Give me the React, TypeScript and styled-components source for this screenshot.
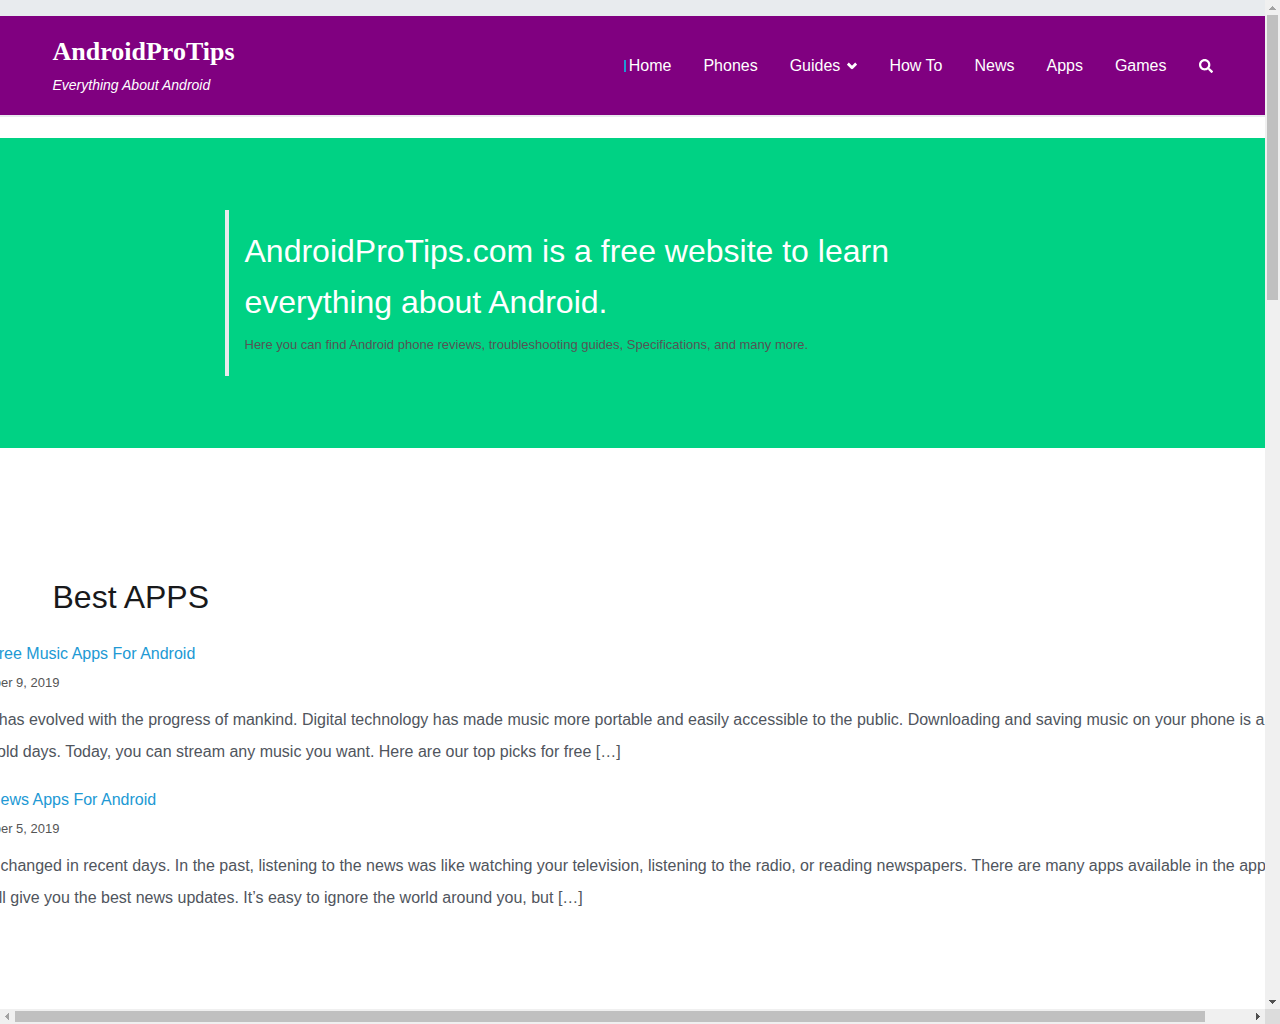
import React from "react";
import styled, { createGlobalStyle } from "styled-components";
import { FaSearch } from "react-icons/fa";

const colors = {
  mist: "#e8ebee",
  purple: "#800080",
  green: "#00d284",
  blue: "#2199d4",
  ink: "#18191b",
  body: "#50555d",
  muted: "#555",
  track: "#f0f0f0",
  thumb: "#c0c0c0",
};

const GlobalStyle = createGlobalStyle`
  *, *::before, *::after { box-sizing: border-box; }
  body {
    margin: 0;
    background: #fff;
    color: ${colors.body};
    font-family: "Liberation Sans", Arial, sans-serif;
    font-size: 16px;
    line-height: 32px;
  }
  h1, h2, h3, p, ul, blockquote { margin: 0; padding: 0; }
  ul { list-style: none; }
  a { color: inherit; text-decoration: none; }
`;

const Shell = styled.div`
  display: grid;
  grid-template: minmax(0, 1fr) 15px / minmax(0, 1fr) 15px;
  height: 100vh;
`;

const Viewport = styled.div`
  overflow: hidden;
`;

const Container = styled.div`
  max-width: 1160px;
  margin: 0 auto;
`;

const Header = styled.header`
  border-top: 16px solid ${colors.mist};
  border-bottom: 2px solid ${colors.mist};
  background: ${colors.purple};
  color: #fff;
`;

const HeaderRow = styled(Container)`
  display: flex;
  align-items: center;
  justify-content: space-between;
  padding: 16px 0;
`;

const SiteTitle = styled.h1`
  font: bold 26px/40px "Liberation Serif", "Times New Roman", serif;
`;

const Tagline = styled.p`
  font-size: 14px;
  font-style: italic;
  line-height: 27px;
`;

const Menu = styled.ul`
  display: flex;
  align-items: center;
  gap: 32px;
`;

const MenuLink = styled.a<{ $current?: boolean }>`
  display: flex;
  align-items: center;
  gap: 7px;
  line-height: 12px;
  ${({ $current }) =>
    $current && `border-left: 2px solid ${colors.blue}; padding-left: 3px;`}
`;

const SearchButton = styled.button`
  display: flex;
  padding: 0;
  border: 0;
  background: none;
  color: inherit;
  cursor: pointer;
`;

const Hero = styled.section`
  margin-top: 21px;
  padding: 72px 24px;
  background: ${colors.green};
`;

const Quote = styled.blockquote`
  max-width: 816px;
  margin: 0 auto;
  padding: 16px;
  border-left: 4px solid ${colors.mist};
`;

const QuoteText = styled.p`
  color: #fff;
  font-size: 32px;
  line-height: 51px;
`;

const QuoteNote = styled.footer`
  padding: 4px 0 2px;
  color: ${colors.muted};
  font-size: 13px;
  line-height: 26px;
`;

const Section = styled(Container)`
  padding-top: 123px;
`;

const SectionTitle = styled.h2`
  color: ${colors.ink};
  font-size: 32px;
  font-weight: 400;
  line-height: 52px;
`;

const PostList = styled.ul`
  display: grid;
  gap: 16px;
  margin: 15px -100px 0;
`;

const PostLink = styled.a`
  display: block;
  color: ${colors.blue};
`;

const PostDate = styled.time`
  display: block;
  margin-bottom: 8px;
  color: ${colors.muted};
  font-size: 13px;
  line-height: 26px;
`;

const Bar = styled.div<{ $across?: boolean }>`
  display: flex;
  flex-direction: ${({ $across }) => ($across ? "row" : "column")};
  background: ${colors.track};
`;

const Track = styled.div<{ $across?: boolean }>`
  display: flex;
  flex: 1;
  flex-direction: ${({ $across }) => ($across ? "row" : "column")};
  padding: ${({ $across }) => ($across ? "2px 0" : "0 2px")};
`;

const Thumb = styled.div<{ $share: number }>`
  flex: 0 0 ${({ $share }) => $share * 100}%;
  background: ${colors.thumb};
`;

const Corner = styled.div`
  background: #dcdcdc;
`;

const arrows = {
  up: "M4 10 7.500 6 11 10Z",
  down: "M4 6 7.500 10 11 6Z",
  left: "M9 4 5 7.500 9 11Z",
  right: "M6 4 10 7.500 6 11Z",
};

function Arrow({ to, dim }: { to: keyof typeof arrows; dim?: boolean }) {
  return (
    <svg width="15" height="15" viewBox="0 0 15 15" fill={dim ? "#a3a3a3" : "#505050"} shapeRendering="crispEdges" aria-hidden="true">
      <path d={arrows[to]} />
    </svg>
  );
}

function Chevron() {
  return (
    <svg width="10" height="8" viewBox="0 0 10 8" fill="none" stroke="currentColor" strokeWidth="2.8" strokeLinejoin="round" aria-hidden="true">
      <path d="M0.800 1.600 5 5.800 9.200 1.600" />
    </svg>
  );
}

const menu = ["Home", "Phones", "Guides", "How To", "News", "Apps", "Games"];

const posts = [
  {
    title: "Best Free Music Apps For Android",
    date: "November 9, 2019",
    dateTime: "2019-11-09",
    excerpt:
      "Music has evolved with the progress of mankind. Digital technology has made music more portable and easily accessible to the public. Downloading and saving music on your phone is a thing of the old days. Today, you can stream any music you want. Here are our top picks for free […]",
  },
  {
    title: "Best News Apps For Android",
    date: "November 5, 2019",
    dateTime: "2019-11-05",
    excerpt:
      "Media changed in recent days. In the past, listening to the news was like watching your television, listening to the radio, or reading newspapers. There are many apps available in the app store that will give you the best news updates. It’s easy to ignore the world around you, but […]",
  },
];

export default function App() {
  return (
    <>
      <GlobalStyle />
      <Shell>
        <Viewport>
          <Header>
            <HeaderRow>
              <div>
                <SiteTitle><a href="#">AndroidProTips</a></SiteTitle>
                <Tagline>Everything About Android</Tagline>
              </div>
              <nav aria-label="Main">
                <Menu>
                  {menu.map((label) => (
                    <li key={label}>
                      <MenuLink href="#" $current={label === "Home"}>
                        {label}
                        {label === "Guides" && <Chevron />}
                      </MenuLink>
                    </li>
                  ))}
                  <li>
                    <SearchButton type="button" aria-label="Search"><FaSearch size={14} /></SearchButton>
                  </li>
                </Menu>
              </nav>
            </HeaderRow>
          </Header>
          <main>
            <Hero>
              <Quote>
                <QuoteText>AndroidProTips.com is a free website to learn everything about Android.</QuoteText>
                <QuoteNote>Here you can find Android phone reviews, troubleshooting guides, Specifications, and many more.</QuoteNote>
              </Quote>
            </Hero>
            <Section as="section">
              <SectionTitle>Best APPS</SectionTitle>
              <PostList>
                {posts.map((post) => (
                  <li key={post.title}>
                    <PostLink href="#">{post.title}</PostLink>
                    <PostDate dateTime={post.dateTime}>{post.date}</PostDate>
                    <p>{post.excerpt}</p>
                  </li>
                ))}
              </PostList>
            </Section>
          </main>
        </Viewport>
        <Bar>
          <Arrow to="up" dim />
          <Track><Thumb $share={285 / 979} /></Track>
          <Arrow to="down" />
        </Bar>
        <Bar $across>
          <Arrow to="left" dim />
          <Track $across><Thumb $share={1265 / 1313} /></Track>
          <Arrow to="right" />
        </Bar>
        <Corner />
      </Shell>
    </>
  );
}
